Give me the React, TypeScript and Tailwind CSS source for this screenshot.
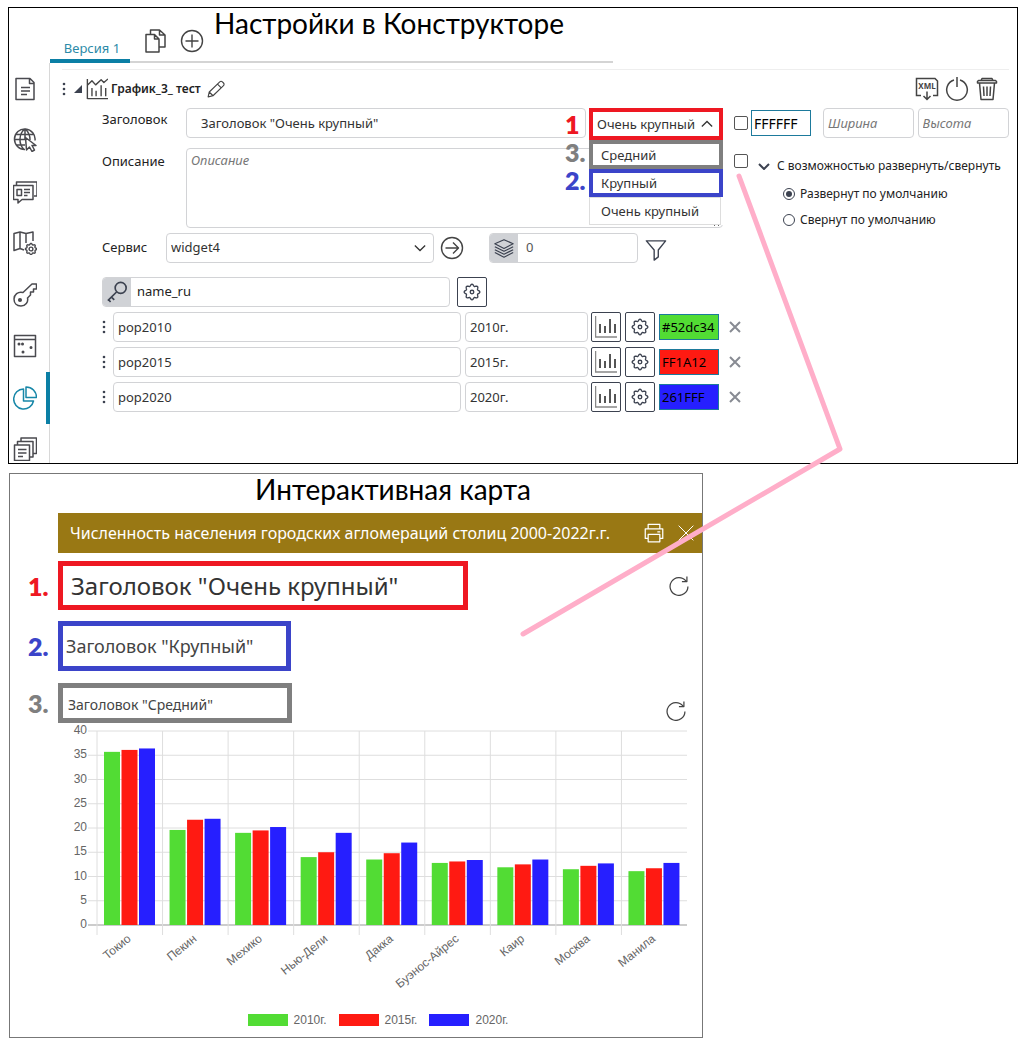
import type { ReactNode } from "react";

const CITIES = [
  { name: "Токио", values: [35.7, 36.1, 36.4] },
  { name: "Пекин", values: [19.6, 21.7, 21.9] },
  { name: "Мехико", values: [19, 19.5, 20.2] },
  { name: "Нью-Дели", values: [14, 15, 19] },
  { name: "Дакка", values: [13.5, 14.8, 17] },
  { name: "Буэнос-Айрес", values: [12.8, 13.1, 13.4] },
  { name: "Каир", values: [11.9, 12.5, 13.5] },
  { name: "Москва", values: [11.5, 12.2, 12.7] },
  { name: "Манила", values: [11.1, 11.7, 12.8] },
];

const SERIES = [
  { field: "pop2010", label: "2010г.", code: "#52dc34", color: "#52dc34", bg: "bg-[#52dc34]" },
  { field: "pop2015", label: "2015г.", code: "FF1A12", color: "#ff1a12", bg: "bg-[#ff1a12]" },
  { field: "pop2020", label: "2020г.", code: "261FFF", color: "#261fff", bg: "bg-[#261fff]" },
];

const FIELD = "min-w-0 rounded border border-[#d2d3d6] bg-white text-[#333] outline-none";
const CHECKBOX = "size-[14px] shrink-0 appearance-none rounded-xs border border-[#555]";
const SQUARE_BUTTON =
  "flex size-[30px] shrink-0 items-center justify-center rounded-xs border border-[#3c4250] text-[#3c4250]";

function Icon({ size = 24, width = 1.5, children }: { size?: number; width?: number; children: ReactNode }) {
  return (
    <svg
      width={size}
      height={size}
      viewBox="0 0 24 24"
      fill="none"
      stroke="currentColor"
      strokeWidth={width}
      strokeLinejoin="round"
      className="shrink-0"
      aria-hidden="true"
    >
      {children}
    </svg>
  );
}

// eight rounded teeth around the hub
const GEAR_POINTS = Array.from({ length: 96 }, (_, i) => {
  const a = (i / 96) * Math.PI * 2;
  const r = 9.2 + 1.2 * Math.cos(8 * a);
  return `${(12 + r * Math.cos(a)).toFixed(2)},${(12 + r * Math.sin(a)).toFixed(2)}`;
}).join(" ");

function Gear() {
  return (
    <Icon size={18} width={1.8}>
      <circle cx="12" cy="12" r="2.4" />
      <polygon points={GEAR_POINTS} />
    </Icon>
  );
}

function Dots() {
  return (
    <svg width="4" height="14" viewBox="0 0 4 14" className="shrink-0 fill-[#3c4250]" aria-hidden="true">
      <circle cx="2" cy="2" r="1.3" />
      <circle cx="2" cy="7" r="1.3" />
      <circle cx="2" cy="12" r="1.3" />
    </svg>
  );
}

function Refresh() {
  return (
    <button type="button" aria-label="Обновить" className="text-[#444]">
      <Icon size={20} width={1.5}>
        <path d="M20.300 5.800A10.700 10.700 0 1 0 22.700 12.500M21.500 .7v6h-6" />
      </Icon>
    </button>
  );
}

const MENU = [
  {
    name: "Страницы",
    icon: <path d="M4 1.5h13l4 4v17H3v-21zM16.5 1.5v5H21M8 10.5h9M8 14h9M8 17.5h6" />,
  },
  {
    name: "Сеть",
    icon: (
      <>
        <path d="M12 21.500a10.300 10.300 0 1 1 10-9M12 1c-6 4-7 15-1 20.500M12 1c4 3 5 7 5 11M3 6.500h17M1.500 11.500h12M3 17h9M12 1v10" />
        <path d="m12.500 9.500 1 12.500 3-3 2.500 4.500 2.500-1.500-2.500-4.500h4z" fill="white" />
      </>
    ),
  },
  {
    name: "Карточки",
    icon: (
      <>
        <path d="M3.500 5.500V2H24v14h-3" />
        <path d="M.5 5.500H20v14H9l-4 3.500v-3.500H.5zM4 9.500h4.500v6H4zM11 9.500h6M11 12.500h6M11 15.500h3.500" />
      </>
    ),
  },
  {
    name: "Карта",
    icon: (
      <>
        <path d="M11 19l-4-1.500-6 2v-17l6-1.500 6 1.500 7-1.500v9M7 1v16.500M13 2.500V12" />
        <svg x="11.500" y="11.500" width="13" height="13" viewBox="0 0 24 24" strokeWidth="2.600" overflow="visible">
          <polygon points={GEAR_POINTS} fill="white" />
          <circle cx="12" cy="12" r="3.500" />
        </svg>
      </>
    ),
  },
  {
    name: "Доступ",
    icon: (
      <>
        <path d="M10 9.500 19 1h4.500v5h-3v3h-3v3l-3 3c1 4-2 8-6.500 8S1 20 1 16s4-8 9-6.500z" />
        <circle cx="7" cy="17" r="1.300" fill="currentColor" />
      </>
    ),
  },
  {
    name: "События",
    icon: (
      <>
        <path d="M1.500 1.500h21v21h-21zM1.500 5.500h21" />
        <path d="M6 10h.01M9.500 10h.01M18 13.500h.01M10 18h.01" strokeWidth="3" strokeLinecap="round" />
      </>
    ),
  },
  {
    name: "Виджеты",
    icon: <path d="M10.500 3A10 10 0 1 0 20.500 15H10.500zM13 1v10.500h10.500C23.500 5.500 19 1 13 1z" />,
  },
  {
    name: "Отчёты",
    icon: (
      <path d="M1.500 8h15v15.500h-15zM4.500 8V4.500H20V20h-3.500M8 4.500V1h15.500v15.500H20M5 12.500h8.500M5 16h8.500M5 19.500h5" />
    ),
  },
];

function Sidebar() {
  return (
    <nav className="flex w-[41px] shrink-0 flex-col justify-between border-r border-[#d8d8d8] pt-[14px] pb-0.5">
      {MENU.map(({ name, icon }) => (
        <a
          key={name}
          href="#"
          aria-label={name}
          className={
            name === "Виджеты"
              ? "relative flex h-6 pl-1 text-[#1787a8]"
              : "relative flex h-6 pl-1 text-[#4a4a4f]"
          }
        >
          <Icon>{icon}</Icon>
          {name === "Виджеты" && <span className="absolute -top-[14px] -right-px h-[52px] w-1 bg-[#0b7fa5]" />}
        </a>
      ))}
    </nav>
  );
}

function Tabs() {
  return (
    <header className="relative flex h-[55px] pl-[41px]">
      <div className="flex w-[563px] border-b-2 border-[#d4d4d4]">
        <button
          type="button"
          className="-mb-0.5 w-20 border-b-4 border-[#0b7fa5] pt-7 pl-1 text-[13px] leading-5 text-[#2b8aa8]"
        >
          Версия 1
        </button>
        <button type="button" aria-label="Копировать" className="ml-[14px] pt-3 text-[#444]">
          <Icon>
            <path d="M6.500 5.500V1h9L21 6v12h-6M15.500 1v5H21M2 5.500h8.500L15 10v13H2zM10.500 5.500V10H15" />
          </Icon>
        </button>
        <button type="button" aria-label="Добавить" className="ml-3 pt-3 text-[#444]">
          <Icon width={1.400}>
            <circle cx="12" cy="12" r="10.500" />
            <path d="M12 5.500v13M5.500 12h13" />
          </Icon>
        </button>
      </div>
      <h1 className="absolute top-0 left-[205px] font-[Lato,'Noto_Sans',sans-serif] text-[28px] leading-[30px] text-black">
        Настройки в Конструкторе
      </h1>
    </header>
  );
}

function WidgetTitle() {
  return (
    <div className="flex h-[38px] items-center border-t border-[#eee] pr-[10px]">
      <Dots />
      <svg width="8" height="8" viewBox="0 0 8 8" className="ml-2 fill-[#3c4250]" aria-hidden="true">
        <path d="M8 0v8H0z" />
      </svg>
      <span className="ml-1 text-[#444]">
        <Icon size={22}>
          <path d="M1.500 1v22M1.500 22.500H24M1.500 8l5-5 4 4.500 6-5.500 3 3 4.500-4M6.500 11v9M11 14v6M16.500 8v12M21.500 11v9" />
        </Icon>
      </span>
      <h2 className="ml-[3px] text-xs font-semibold text-[#222]">График_3_ тест</h2>
      <button type="button" aria-label="Переименовать" className="ml-[6px] text-[#444]">
        <Icon size={18}>
          <path d="M1.500 22.500 3 16 17 2.500c1-1 2.500-1 3.500 0l1.500 1.500c1 1 1 2.500 0 3.500L8 21zM14 5.500l5 5M3 16l5 5" />
        </Icon>
      </button>
      <div className="ml-auto flex gap-[6px] text-[#444]">
        <button type="button" aria-label="Выгрузить XML">
          <svg width="24" height="24" viewBox="0 0 24 24" fill="none" stroke="currentColor" strokeWidth="1.500">
            <path d="M6 18.500H1.500v-17H20l2.500 2.500v14.500H18M12 14.500v8M8.500 19l3.500 3.500 3.500-3.500" />
            <text x="12" y="12" textAnchor="middle" className="fill-[#444] stroke-none text-[8px] font-bold">
              XML
            </text>
          </svg>
        </button>
        <button type="button" aria-label="Выключить">
          <Icon>
            <path d="M9 3a10.300 10.300 0 1 0 6 0M12 0v10" />
          </Icon>
        </button>
        <button type="button" aria-label="Удалить">
          <Icon>
            <path d="M2.500 6h19v-1.500l-1-1h-17l-1 1zM6 3.500l1-2h10l1 2M4.500 6l1.500 16.500h12L19.500 6M8.500 9.500l.5 9.500M12 9.500V19M15.500 9.500 15 19" />
          </Icon>
        </button>
      </div>
    </div>
  );
}

/** Size drop-down in its open state, with the numbered marks beside it. */
function SizeSelect() {
  return (
    <div className="relative w-[134px] shrink-0">
      <label className="relative flex h-8 items-center border-4 border-[#ee1822]">
        <span className="sr-only">Размер заголовка</span>
        <select className="h-6 w-full appearance-none bg-white pl-1 text-[13px] leading-6 text-[#333] outline-none">
          <option>Очень крупный</option>
        </select>
        <svg
          width="12"
          height="8"
          viewBox="0 0 14 8"
          fill="none"
          stroke="#333"
          strokeWidth="1.500"
          className="absolute right-[6px]"
          aria-hidden="true"
        >
          <path d="m1 7 6-6 6 6" />
        </svg>
      </label>
      <ul className="absolute inset-x-0 top-8 z-10 bg-white text-[13px] leading-5 text-[#333]">
        <li className="flex h-[29px] items-center border-4 border-[#7f7f7f] pl-2">Средний</li>
        <li className="flex h-7 items-center border-4 border-[#3b44c9] pl-2">Крупный</li>
        <li className="mr-0.5 flex h-7 items-center border border-[#ddd] pl-[11px]">Очень крупный</li>
      </ul>
      <div className="absolute top-0.5 -left-6 z-10 font-[Lato,'Noto_Sans',sans-serif] text-[25px] leading-7 font-extrabold">
        <p className="text-[#ee1822]">1</p>
        <p className="text-[#7f7f7f]">3.</p>
        <p className="text-[#3b44c9]">2.</p>
      </div>
    </div>
  );
}

function DisplayOptions() {
  return (
    <div className="w-[275px] shrink-0">
      <div className="flex items-center">
        <input type="checkbox" aria-label="Цвет фона" className={CHECKBOX} />
        <input
          aria-label="Код цвета"
          defaultValue="FFFFFF"
          className="ml-[3px] h-[26px] w-[60px] border border-[#1d7a9c] pl-0.5 text-sm text-black outline-none"
        />
        <input
          aria-label="Ширина"
          placeholder="Ширина"
          className={`${FIELD} ml-3 h-[30px] w-[91px] pl-1 text-[13px] italic placeholder:text-[#777]`}
        />
        <input
          aria-label="Высота"
          placeholder="Высота"
          className={`${FIELD} ml-1 h-[30px] w-[92px] pl-1 text-[13px] italic placeholder:text-[#777]`}
        />
      </div>
      <div className="mt-4 flex items-start">
        <input id="collapsible" type="checkbox" className={CHECKBOX} />
        <svg
          width="12"
          height="7"
          viewBox="0 0 12 7"
          fill="none"
          stroke="#3c4250"
          strokeWidth="2"
          className="mt-[9px] ml-[10px] shrink-0"
          aria-hidden="true"
        >
          <path d="m1 1 5 5 5-5" />
        </svg>
        <label htmlFor="collapsible" className="mt-0.5 ml-[7px] text-xs leading-5 whitespace-nowrap">
          С возможностью развернуть/свернуть
        </label>
      </div>
      <div className="mt-2 ml-[49px] space-y-[6px] text-xs leading-5">
        <label className="flex items-center gap-[5px]">
          <span className="relative flex size-3 items-center justify-center">
            <input
              type="radio"
              name="state"
              defaultChecked
              className="peer size-3 appearance-none rounded-full border border-[#3c4250]"
            />
            <span className="pointer-events-none absolute hidden size-[6px] rounded-full bg-[#3c4250] peer-checked:block" />
          </span>
          Развернут по умолчанию
        </label>
        <label className="flex items-center gap-[5px]">
          <input type="radio" name="state" className="size-3 appearance-none rounded-full border border-[#3c4250]" />
          Свернут по умолчанию
        </label>
      </div>
    </div>
  );
}

function ServiceRow() {
  return (
    <div className="mt-[3px] flex h-[30px] items-center">
      <label htmlFor="service" className="w-16 shrink-0 text-[13px]">
        Сервис
      </label>
      <div className="relative flex w-[268px] items-center">
        <select id="service" className={`${FIELD} h-[30px] w-full appearance-none pl-1 text-[13px]`}>
          <option>widget4</option>
        </select>
        <svg
          width="12"
          height="8"
          viewBox="0 0 14 8"
          fill="none"
          stroke="#333"
          strokeWidth="1.500"
          className="pointer-events-none absolute right-2"
          aria-hidden="true"
        >
          <path d="m1 1 6 6 6-6" />
        </svg>
      </div>
      <button type="button" aria-label="Перейти" className="ml-[6px] text-[#444]">
        <Icon width={1.400}>
          <circle cx="12" cy="12" r="10.500" />
          <path d="M5.500 12h13M13 6.500l5.500 5.500-5.500 5.500" />
        </Icon>
      </button>
      <div className="ml-[25px] flex h-[30px] w-[149px] overflow-hidden rounded border border-[#d2d3d6]">
        <span className="flex w-7 items-center justify-center bg-[#d0d2d6] text-[#3c4250]">
          <Icon size={20} width={1.400}>
            <path d="m12 2 11 5-11 5.500L1 7zM1 10.500l11 5.500 11-5.500M1 14l11 5.500L23 14M1 17.500 12 23l11-5.500" />
          </Icon>
        </span>
        <input aria-label="Слои" defaultValue="0" className="w-0 flex-1 pl-2 text-[13px] text-[#555] outline-none" />
      </div>
      <button type="button" aria-label="Фильтр" className="ml-[7px] pt-1 text-[#3c4250]">
        <Icon size={22}>
          <path d="M1.500 2h21l-8 10v7.500L10 23V12z" />
        </Icon>
      </button>
    </div>
  );
}

function FieldRows() {
  return (
    <div className="mt-[14px] flex flex-col gap-[5px]">
      <div className="flex gap-[7px]">
        <div className="flex h-[30px] w-[348px] overflow-hidden rounded border border-[#d2d3d6]">
          <span className="flex w-7 items-center justify-center bg-[#d0d2d6] text-[#3c4250]">
            <Icon size={22} width={1.800}>
              <circle cx="16" cy="7.500" r="6" />
              <path d="M11.500 12 2 21.500M6 17.500l3 3M2.500 20l2.500 3" />
            </Icon>
          </span>
          <input
            aria-label="Ключевое поле"
            defaultValue="name_ru"
            className="w-0 flex-1 pl-[6px] text-[13px] text-[#222] outline-none"
          />
        </div>
        <button type="button" aria-label="Настроить поле" className={SQUARE_BUTTON}>
          <Gear />
        </button>
      </div>
      {SERIES.map(({ field, label, code, bg }) => (
        <div key={field} className="flex items-center">
          <Dots />
          <input
            aria-label="Поле"
            defaultValue={field}
            className={`${FIELD} ml-[7px] h-[30px] w-[348px] pl-1 text-[13px]`}
          />
          <input
            aria-label="Подпись"
            defaultValue={label}
            className={`${FIELD} ml-1 h-[30px] w-[123px] pl-1 text-[13px]`}
          />
          <button type="button" aria-label="Тип графика" className={`${SQUARE_BUTTON} ml-[3px]`}>
            <svg width="22" height="22" viewBox="0 0 22 22" fill="none" stroke="#555" aria-hidden="true">
              <path d="M.5 0v21H22" strokeWidth="1.500" stroke="#888" />
              <path d="M5 8v9M10 10v7M15 3v14M20 8v9" strokeWidth="2" />
            </svg>
          </button>
          <button type="button" aria-label="Настроить серию" className={`${SQUARE_BUTTON} ml-1`}>
            <Gear />
          </button>
          <input
            aria-label="Цвет серии"
            defaultValue={code}
            className={`${bg} ml-1 h-[26px] w-[60px] border border-[#1d7a9c] pl-0.5 text-[13px] text-black outline-none`}
          />
          <button type="button" aria-label="Удалить серию" className="ml-[10px] text-[#888b93]">
            <Icon size={12} width={4}>
              <path d="m2 2 20 20M22 2 2 22" />
            </Icon>
          </button>
        </div>
      ))}
    </div>
  );
}

function Constructor() {
  return (
    <section className="border border-black bg-white">
      <Tabs />
      <div className="flex">
        <Sidebar />
        <main className="min-w-0 flex-1 pt-[6px] pr-2 pb-[51px] pl-3">
          <WidgetTitle />
          <div className="mt-px flex justify-between gap-[11px] pl-10">
            <div className="min-w-0 flex-1">
              <div className="flex">
                <label htmlFor="title" className="w-[84px] shrink-0 text-[13px] leading-[22px]">
                  Заголовок
                </label>
                <input
                  id="title"
                  defaultValue={'Заголовок "Очень крупный"'}
                  className={`${FIELD} h-[30px] flex-1 pl-[14px] text-[13px]`}
                />
                <div className="ml-[3px]">
                  <SizeSelect />
                </div>
              </div>
              <div className="mt-2 flex">
                <label htmlFor="description" className="w-[84px] shrink-0 pt-1 text-[13px]">
                  Описание
                </label>
                <textarea
                  id="description"
                  placeholder="Описание"
                  className={`${FIELD} h-20 flex-1 pt-px pl-1 text-[13px] leading-5 italic placeholder:text-[#777]`}
                />
              </div>
            </div>
            <DisplayOptions />
          </div>
          <div className="pl-10">
            <ServiceRow />
            <FieldRows />
          </div>
        </main>
      </div>
    </section>
  );
}

// plot area inside the chart drawing
const LEFT = 39;
const RIGHT = 629;
const TOP = 8;
const BOTTOM = 202;
const STEP = (RIGHT - LEFT) / CITIES.length;
const UNIT = (BOTTOM - TOP) / 40;

function Chart() {
  return (
    <svg
      viewBox="0 0 644 287"
      className="block w-full font-['Liberation_Sans',Arial,sans-serif] text-[12px]"
      role="img"
      aria-label="Численность населения"
    >
      {[0, 5, 10, 15, 20, 25, 30, 35, 40].map((tick) => {
        const y = BOTTOM - tick * UNIT;
        return (
          <g key={tick}>
            <path d={`M${LEFT - 9} ${y}H${RIGHT}`} stroke={tick ? "#dedede" : "#999"} />
            <text x={LEFT - 10} y={y + 3} textAnchor="end" fill="#666">
              {tick}
            </text>
          </g>
        );
      })}
      {CITIES.map(({ name, values }, i) => {
        const x = LEFT + i * STEP;
        return (
          <g key={name}>
            <path d={`M${x} ${TOP}V${BOTTOM + 10}`} stroke="#dedede" />
            {values.map((value, n) => (
              <rect
                key={n}
                x={x + 7 + n * 17.5}
                y={BOTTOM - value * UNIT}
                width="16"
                height={value * UNIT}
                fill={SERIES[n].color}
              />
            ))}
            <text
              transform={`translate(${x + STEP / 2 + 2} ${BOTTOM + 15}) rotate(-39)`}
              textAnchor="end"
              fill="#666"
            >
              {name}
            </text>
          </g>
        );
      })}
    </svg>
  );
}

function Mark({ className, children }: { className: string; children: string }) {
  return (
    <span
      className={`${className} w-12 shrink-0 pl-[18px] font-[Lato,'Noto_Sans',sans-serif] text-[25px] leading-7 font-extrabold`}
    >
      {children}
    </span>
  );
}

function MapWidget() {
  return (
    <section className="ml-px max-w-[694px] border border-[#777] bg-white">
      <h1 className="h-[39px] pl-[245px] font-[Lato,'Noto_Sans',sans-serif] text-[28px] leading-[30px] text-black">
        Интерактивная карта
      </h1>
      <div className="ml-12 flex h-10 items-center bg-[#997814] pr-2 pl-3 text-white">
        <h2 className="flex-1 text-base">Численность населения городских агломераций столиц 2000-2022г.г.</h2>
        <button type="button" aria-label="Печать">
          <Icon size={20}>
            <path d="M5 7V1.500h14V7M5 18.500H1.500V7h21v11.500H19M5 13.500h14v9H5zM16 10.500h3.500" />
          </Icon>
        </button>
        <button type="button" aria-label="Закрыть" className="ml-[14px]">
          <Icon size={16}>
            <path d="m1 1 22 22M23 1 1 23" />
          </Icon>
        </button>
      </div>
      <div className="mt-2 flex items-center pr-[13px] text-[#333]">
        <Mark className="text-[#ee1822]">1.</Mark>
        <p className="flex h-[49px] w-[410px] items-center border-[5px] border-[#ee1822] pl-2 text-2xl">
          Заголовок "Очень крупный"
        </p>
        <span className="ml-auto flex">
          <Refresh />
        </span>
      </div>
      <div className="mt-[11px] flex items-center text-[#444]">
        <Mark className="text-[#3b44c9]">2.</Mark>
        <p className="flex h-[50px] w-[233px] items-center border-[5px] border-[#3b44c9] pl-[3px] text-lg">
          Заголовок "Крупный"
        </p>
      </div>
      <div className="mt-3 flex items-center pr-4 text-[#444]">
        <Mark className="text-[#7f7f7f]">3.</Mark>
        <p className="flex h-10 w-[234px] items-center border-[5px] border-[#7f7f7f] pt-[3px] pl-[5px] text-sm">
          Заголовок "Средний"
        </p>
        <span className="ml-auto flex pt-4">
          <Refresh />
        </span>
      </div>
      <div className="pl-12">
        <Chart />
        <ul className="flex h-[27px] justify-center gap-3 pt-1 pr-1 font-['Liberation_Sans',Arial,sans-serif] text-xs leading-3 text-[#666]">
          {SERIES.map(({ label, bg }) => (
            <li key={label} className="flex gap-[6px]">
              <span className={`${bg} h-3 w-10`} />
              {label}
            </li>
          ))}
        </ul>
      </div>
    </section>
  );
}

export default function App() {
  return (
    <div className="relative min-h-screen bg-white pt-[7px] pr-[6px] pb-[7px] pl-2 font-['Noto_Sans',sans-serif] text-[#222]">
      <Constructor />
      <div className="h-[9px]" />
      <MapWidget />
      {/* pointer from the collapse option to the map */}
      <svg
        width="330"
        height="470"
        viewBox="516 168 330 470"
        fill="none"
        className="pointer-events-none absolute top-[168px] left-[516px] z-20"
        aria-hidden="true"
      >
        <path d="M739 176 840 449 523 634" stroke="#ffaec9" strokeWidth="5" strokeLinecap="round" strokeLinejoin="round" />
      </svg>
    </div>
  );
}
